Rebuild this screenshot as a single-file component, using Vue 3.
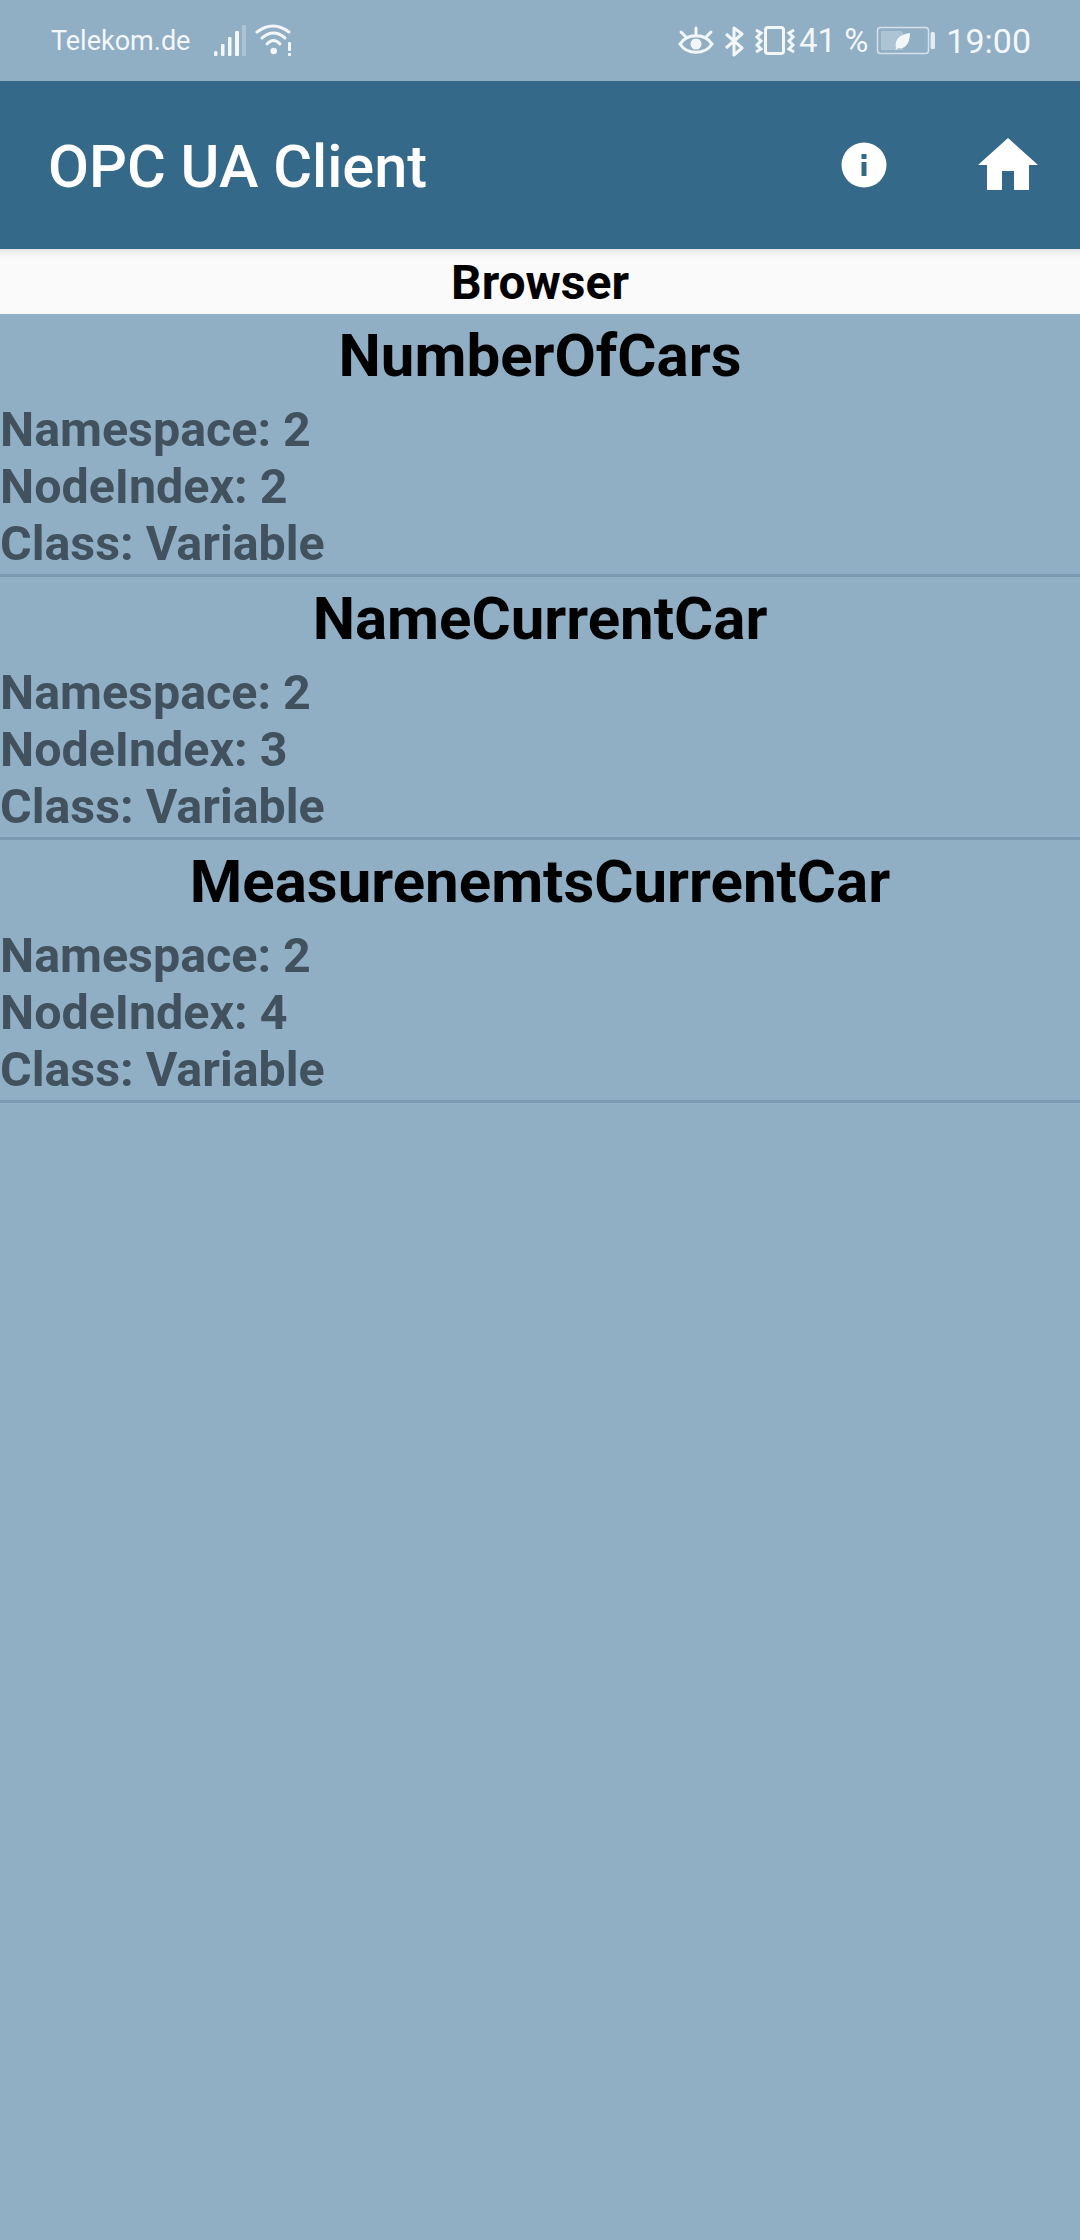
<template>
  <div class="screen">
    <div class="status">
      <div class="status-left">
        <span class="carrier">Telekom.de</span>
        <svg class="signal" width="33" height="32" viewBox="0 0 33 32">
          <rect x="1" y="26" width="3.5" height="5" rx="1.500" fill="#f3f7fa" />
          <rect x="8" y="19" width="3.5" height="12" rx="1" fill="#f3f7fa" />
          <rect x="15" y="12" width="3.500" height="19" rx="1" fill="#f3f7fa" />
          <rect x="22" y="6" width="4" height="25" rx="1" fill="#f3f7fa" />
          <rect x="29" y="0" width="4" height="31" rx="1" fill="#f3f7fa" opacity="0.3" />
        </svg>
        <svg class="wifi" width="38" height="33" viewBox="0 0 38 33" fill="none" stroke="#f3f7fa" stroke-width="3" stroke-linecap="round">
          <path d="M2 8Q18 -4 34 8" />
          <path d="M7 14Q18.500 4 30 14" />
          <path d="M12 20Q18.500 13 25 20" />
          <circle cx="18.700" cy="27" r="3.300" fill="#f3f7fa" stroke="none" />
          <rect x="33" y="18" width="3" height="9" rx="1" fill="#f3f7fa" stroke="none" />
          <rect x="33" y="29" width="3" height="3" rx="1" fill="#f3f7fa" stroke="none" />
        </svg>
      </div>
      <div class="status-right">
        <svg class="eye" width="36" height="30" viewBox="0 0 36 30" fill="none" stroke="#f3f7fa" stroke-width="3" stroke-linecap="round">
          <path d="M2 18C9 7 27 7 34 18C27 29 9 29 2 18Z" />
          <circle cx="18" cy="18" r="5.500" fill="#f3f7fa" stroke="none" />
          <path d="M3 6L8 11M18 2V8M33 6L28 11" />
        </svg>
        <svg class="bt" width="20" height="32" viewBox="0 0 20 32" fill="none" stroke="#f3f7fa" stroke-width="3" stroke-linejoin="round">
          <path d="M2 9L18 23L10 30V3L18 9L2 23" />
        </svg>
        <svg class="vib" width="42" height="32" viewBox="0 0 42 32" fill="none" stroke="#f3f7fa" stroke-width="3">
          <rect x="11.500" y="2.500" width="18" height="26" rx="2.500" />
          <path d="M2 5L7 8L3 12L7 16L3 20L7 24L2 27M40 5L35 8L39 12L35 16L39 20L35 24L40 27" />
        </svg>
        <span class="battery-text">41 %</span>
        <svg class="battery" width="60" height="29" viewBox="0 0 60 29" fill="none">
          <rect x="1.500" y="1.500" width="51" height="26" rx="3" stroke="#f3f7fa" stroke-width="1.500" opacity="0.7" />
          <path d="M5 5H24Q27 5 27 8V24H5Z" fill="#f3f7fa" opacity="0.3" />
          <path d="M20 22C18 13 25 8 34 7C34 16 30 24 22 22L19.500 24.500Z" fill="#f3f7fa" />
          <rect x="54.500" y="6" width="4.500" height="17" rx="1.500" fill="#f3f7fa" opacity="0.85" />
        </svg>
        <span class="time">19:00</span>
      </div>
    </div>

    <header class="appbar">
      <h1 class="appbar-title">OPC UA Client</h1>
      <div class="actions">
        <svg class="info" width="46" height="46" viewBox="0 0 46 46">
          <circle cx="23" cy="23" r="22.500" fill="#fff" />
          <rect x="20.500" y="12" width="5" height="5" fill="#34698a" />
          <rect x="20.500" y="20" width="5" height="14" fill="#34698a" />
        </svg>
        <svg class="home" width="60" height="52" viewBox="0 0 60 52">
          <path d="M30 0L60 27H51V52H36V33H24V52H9V27H0Z" fill="#fff" />
        </svg>
      </div>
    </header>

    <div class="subhead">Browser</div>

    <div class="item" v-for="node in nodes" :key="node.index">
      <div class="item-name">{{ node.name }}</div>
      <div class="item-line">Namespace: 2</div>
      <div class="item-line">NodeIndex: {{ node.index }}</div>
      <div class="item-line">Class: Variable</div>
    </div>
  </div>
</template>

<script setup>
const nodes = [
  { name: 'NumberOfCars', index: 2 },
  { name: 'NameCurrentCar', index: 3 },
  { name: 'MeasurenemtsCurrentCar', index: 4 }
]
</script>

<style>
body {
  margin: 0;
}
</style>

<style scoped>
.screen {
  width: 1080px;
  height: 2240px;
  background: #90aec4;
  font-family: Roboto, sans-serif;
  overflow: hidden;
}

.status {
  height: 81px;
  display: flex;
  justify-content: space-between;
  align-items: center;
  color: #f3f7fa;
  padding: 0 49px 0 51px;
  box-sizing: border-box;
}
.status-left,
.status-right {
  display: flex;
  align-items: center;
}
.carrier {
  font-size: 27px;
  margin-right: 23px;
}
.signal {
  margin-right: 9px;
}
.eye {
  margin-right: 10px;
}
.bt {
  margin-right: 10px;
}
.vib {
  margin-right: 3px;
}
.battery-text {
  font-size: 33px;
  margin-right: 8px;
}
.battery {
  margin-right: 10px;
}
.time {
  font-size: 34px;
}

.appbar {
  height: 168px;
  background: #34698a;
  display: flex;
  justify-content: space-between;
  align-items: center;
  padding: 0 42px 0 48px;
  box-sizing: border-box;
}
.appbar-title {
  margin: 4px 0 0;
  font-size: 59.5px;
  font-weight: 500;
  color: #fff;
}
.actions {
  display: flex;
  align-items: center;
  gap: 91px;
}
.home {
  margin-bottom: 3px;
}

.subhead {
  height: 65px;
  padding-top: 1px;
  line-height: 65px;
  box-sizing: border-box;
  background: #fafafa;
  box-shadow: inset 0 10px 8px -8px rgba(0, 0, 0, 0.12);
  text-align: center;
  font-size: 48px;
  font-weight: 700;
  color: #000;
}

.item {
  height: 263px;
  box-sizing: border-box;
  border-bottom: 3px solid #7b9ab1;
}
.item-name {
  text-align: center;
  font-size: 60px;
  font-weight: 700;
  line-height: 83px;
  margin-bottom: 4px;
  color: #000;
}
.item-line {
  font-size: 48.4px;
  font-weight: 700;
  line-height: 57px;
  color: #41525e;
}
</style>
